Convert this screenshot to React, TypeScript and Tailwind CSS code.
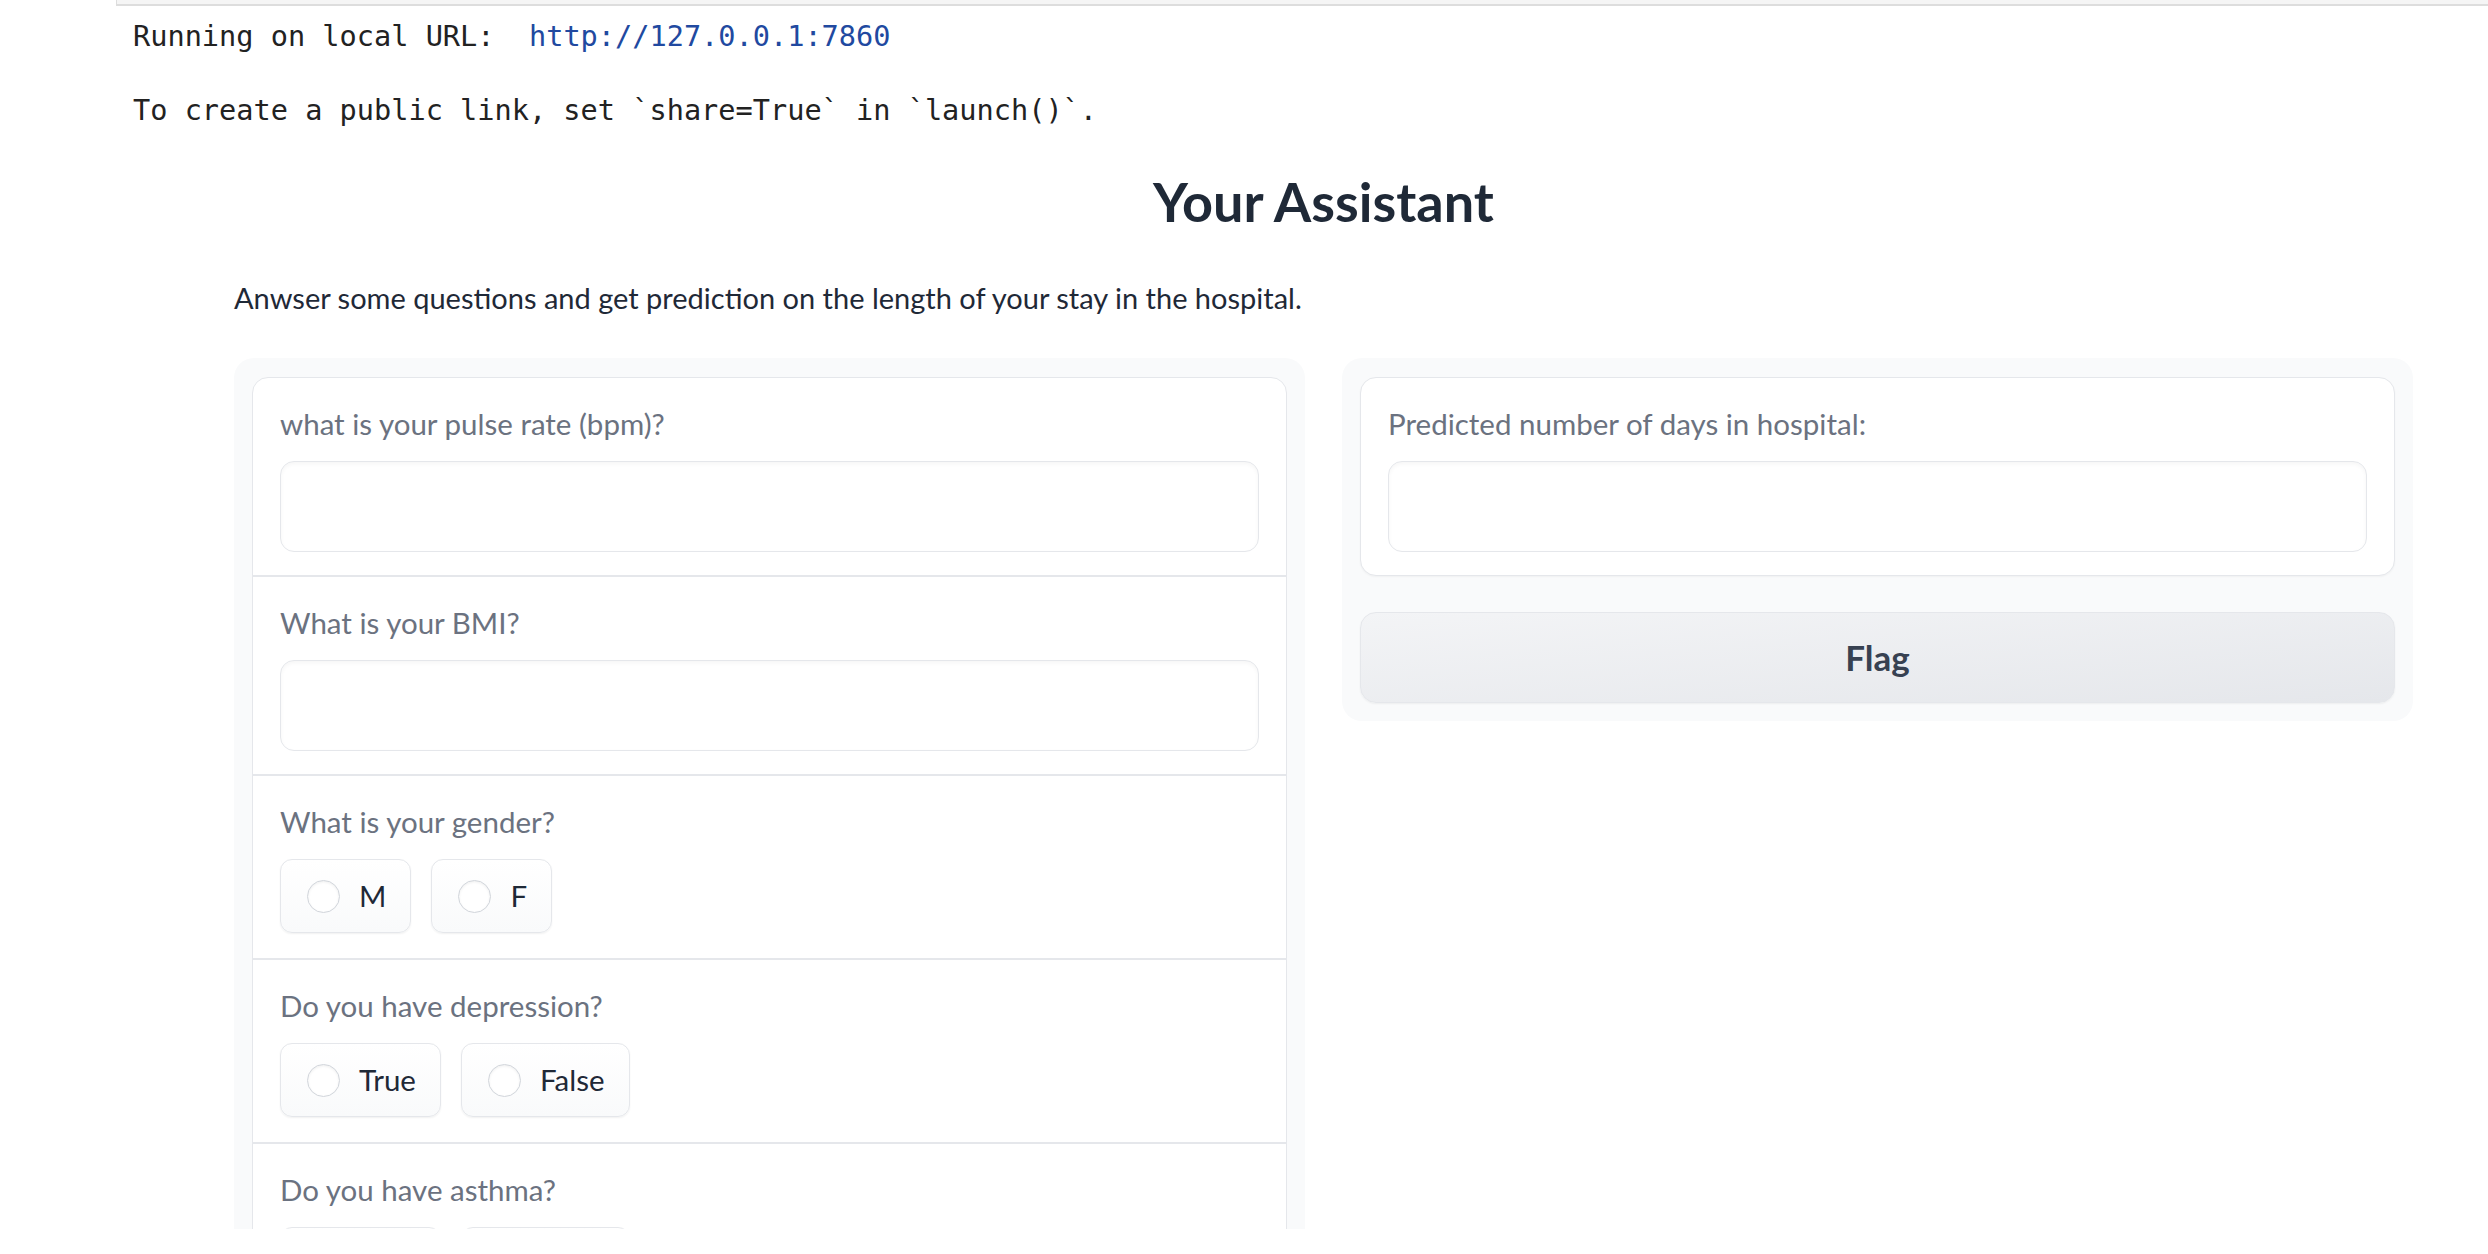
import React from 'react'

// Gradio-style form rendered inside a notebook output cell

function Field({ label, children, last, pb = 'pb-[23px]' }: { label: string; children: React.ReactNode; last?: boolean; pb?: string }) {
  return (
    <div className={`px-[27px] pt-[30px] ${pb} ${last ? '' : 'border-b-2 border-[#e5e7eb]'}`}>
      <div className="h-[32px] leading-[32px] text-[29.5px] text-[#6b7280]">{label}</div>
      <div className="mt-[21px]">{children}</div>
    </div>
  )
}

function TextBox() {
  return (
    <div className="h-[91px] rounded-[14px] border border-[#e5e7eb] bg-white shadow-[inset_0_2px_4px_rgba(0,0,0,0.04)]" />
  )
}

function Radio({ label }: { label: string }) {
  return (
    <label className="flex items-center gap-[19px] h-[74px] pl-[26px] pr-[24px] rounded-[12px] border border-[#e5e7eb] bg-gradient-to-b from-white to-[#f9fafb] shadow-[0_1px_2px_rgba(0,0,0,0.06)] text-[29.5px] text-[#1f2937]">
      <span className="w-[33px] h-[33px] rounded-full border border-[#d1d5db] bg-white shadow-[inset_0_1px_3px_rgba(0,0,0,0.07)]" />
      {label}
    </label>
  )
}

function RadioGroup({ options }: { options: string[] }) {
  return (
    <div className="flex gap-[20px]">
      {options.map((o) => (
        <Radio key={o} label={o} />
      ))}
    </div>
  )
}

export default function App() {
  return (
    <div className="w-[2488px] h-[1254px] bg-white overflow-hidden">
      {/* cell output top edge */}
      <div className="ml-[116px] h-[6px] bg-[#f5f5f5] border-l border-b-2 border-[#dddddd]" />

      {/* server log */}
      <div className="pl-[133px] font-['DejaVu_Sans_Mono',monospace] text-[28.6px] text-[#222222] whitespace-pre">
        <div className="mt-[10px] h-[40px] leading-[40px]">
          Running on local URL:  <span className="text-[#2149a0]">http://127.0.0.1:7860</span>
        </div>
        <div className="mt-[34px] h-[40px] leading-[40px]">To create a public link, set `share=True` in `launch()`.</div>
      </div>

      {/* gradio app */}
      <div className="h-[1099px] overflow-hidden pl-[234px] pr-[75px] pt-[39px] font-['Lato',sans-serif]">
        <h1 className="text-center text-[54px] leading-[65px] font-bold text-[#1f2937]">Your Assistant</h1>
        <p className="mt-[48px] text-[29px] leading-[32px] text-[#1f2937]">
          Anwser some questions and get prediction on the length of your stay in the hospital.
        </p>

        <div className="mt-[44px] flex items-start gap-[37px]">
          {/* inputs */}
          <div className="flex-1 rounded-[20px] bg-[#f9fafb] px-[18px] pt-[19px]">
            <div className="rounded-[16px] border border-[#e5e7eb] bg-white">
              <Field label="what is your pulse rate (bpm)?">
                <TextBox />
              </Field>
              <Field label="What is your BMI?">
                <TextBox />
              </Field>
              <Field label="What is your gender?" pb="pb-[25px]">
                <RadioGroup options={['M', 'F']} />
              </Field>
              <Field label="Do you have depression?" pb="pb-[25px]">
                <RadioGroup options={['True', 'False']} />
              </Field>
              <Field label="Do you have asthma?" pb="pb-[25px]">
                <RadioGroup options={['True', 'False']} />
              </Field>
              <Field label="Do you have diabetes?" last pb="pb-[25px]">
                <RadioGroup options={['True', 'False']} />
              </Field>
            </div>
          </div>

          {/* outputs */}
          <div className="flex-1 rounded-[20px] bg-[#f9fafb] p-[18px] pt-[19px]">
            <div className="rounded-[16px] border border-[#e5e7eb] bg-white shadow-[0_1px_2px_rgba(0,0,0,0.04)]">
              <Field label="Predicted number of days in hospital:" last>
                <TextBox />
              </Field>
            </div>
            <button className="mt-[36px] w-full h-[91px] rounded-[16px] border border-[#e5e7eb] bg-gradient-to-br from-[#f3f4f6] to-[#e5e7eb] shadow-[0_1px_2px_rgba(0,0,0,0.05)] text-[35px] font-bold text-[#374151]">
              Flag
            </button>
          </div>
        </div>
      </div>
    </div>
  )
}
